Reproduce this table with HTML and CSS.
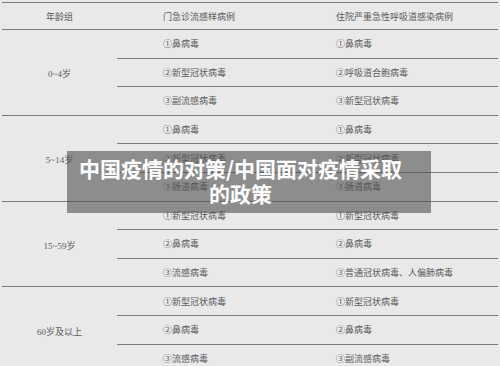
FILE: index.html
```html
<!DOCTYPE html>
<html lang="zh-CN">
<head>
  <meta charset="UTF-8">
  <meta name="viewport" content="width=device-width, initial-scale=1.0">
  <title>中国疫情的对策/中国面对疫情采取的政策</title>
  <link rel="stylesheet" href="styles.css">
</head>
<body>

  <div class="page">
    <table class="flu-table">
      <colgroup>
        <col class="col-age">
        <col class="col-outpatient">
        <col class="col-inpatient">
      </colgroup>
      <thead>
        <tr>
          <th class="age">年龄组</th>
          <th>门急诊流感样病例</th>
          <th>住院严重急性呼吸道感染病例</th>
        </tr>
      </thead>
      <tbody>
        <tr>
          <td class="age" rowspan="3">0~4岁</td>
          <td>①鼻病毒</td>
          <td>①鼻病毒</td>
        </tr>
        <tr>
          <td>②新型冠状病毒</td>
          <td>②呼吸道合胞病毒</td>
        </tr>
        <tr>
          <td>③副流感病毒</td>
          <td>③新型冠状病毒</td>
        </tr>

        <tr>
          <td class="age" rowspan="3">5~14岁</td>
          <td>①鼻病毒</td>
          <td>①鼻病毒</td>
        </tr>
        <tr>
          <td>②新型冠状病毒</td>
          <td>②新型冠状病毒</td>
        </tr>
        <tr>
          <td>③肠道病毒</td>
          <td>③肠道病毒</td>
        </tr>

        <tr>
          <td class="age" rowspan="3">15~59岁</td>
          <td>①新型冠状病毒</td>
          <td>①新型冠状病毒</td>
        </tr>
        <tr>
          <td>②鼻病毒</td>
          <td>②鼻病毒</td>
        </tr>
        <tr>
          <td>③流感病毒</td>
          <td>③普通冠状病毒、人偏肺病毒</td>
        </tr>

        <tr>
          <td class="age" rowspan="3">60岁及以上</td>
          <td>①新型冠状病毒</td>
          <td>①新型冠状病毒</td>
        </tr>
        <tr>
          <td>②鼻病毒</td>
          <td>②鼻病毒</td>
        </tr>
        <tr>
          <td>③流感病毒</td>
          <td>③副流感病毒</td>
        </tr>
      </tbody>
    </table>

    <div class="headline">中国疫情的对策/中国面对疫情采取的政策</div>
  </div>

</body>
</html>
```

FILE: styles.css
```css
body {
  margin: 0;
  background: #e9e9e9;
  font-family: "Liberation Serif", "Noto Sans CJK SC", serif;
  font-size: 9px;
  color: #5a5a5a;
  overflow: hidden;
}
.page {
  position: relative;
  padding: 2px 2px 0;
}
.flu-table {
  width: 496px;
  border-collapse: collapse;
  table-layout: fixed;
}
.col-age {
  width: 115px;
}
.col-outpatient {
  width: 173px;
}
.flu-table thead tr {
  height: 27px;
}
.flu-table tbody tr {
  height: 28.6px;
}
.flu-table th,
.flu-table td {
  border-top: 1px solid #7c7c7c;
  padding: 1px 0 0 46px;
  line-height: 12px;
  text-align: left;
  font-weight: normal;
  vertical-align: middle;
  white-space: nowrap;
}
.flu-table .age {
  padding-left: 0;
  padding-top: 4px;
  text-align: center;
}
.flu-table thead .age {
  padding-top: 1px;
}
/* 标题浮层 */
.headline {
  position: absolute;
  left: 67px;
  top: 151px;
  width: 364px;
  height: 62px;
  box-sizing: border-box;
  padding: 5px 26px 0 9px;
  background: rgba(80, 80, 80, 0.6);
  color: #fff;
  font-family: "Noto Sans CJK SC", sans-serif;
  font-weight: bold;
  font-size: 21px;
  line-height: 24.5px;
  text-align: center;
}
```
